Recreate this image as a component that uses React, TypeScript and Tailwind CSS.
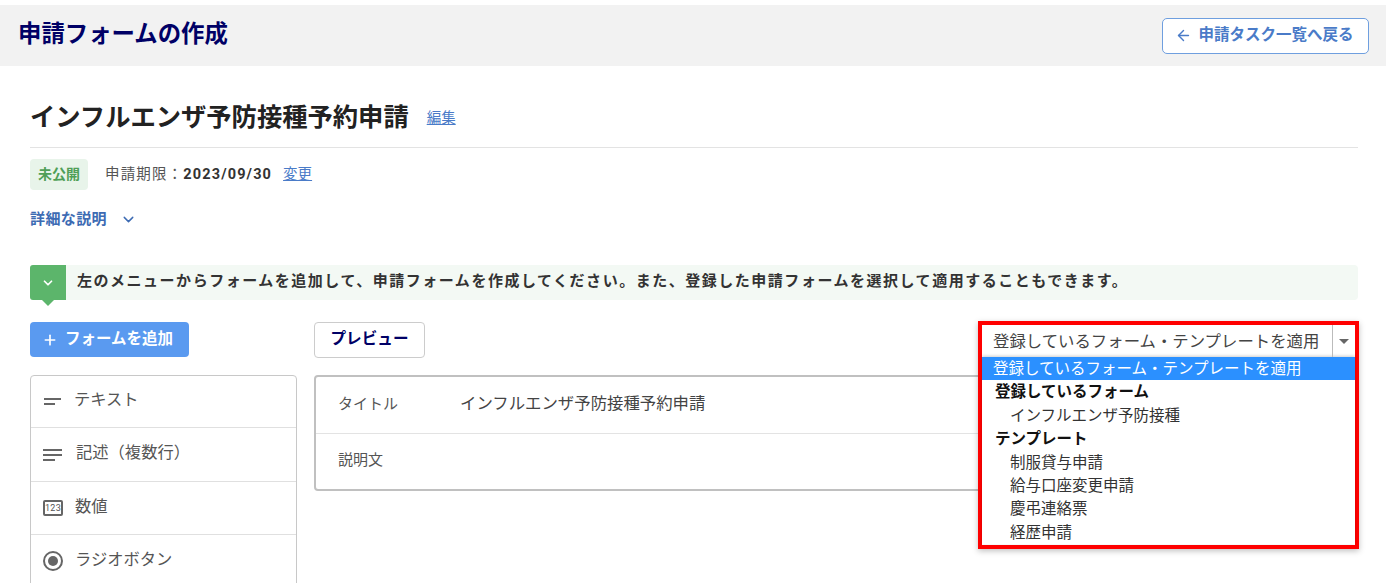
import { ArrowLeft, ChevronDown, Plus } from "lucide-react";

const FONT = "font-['Roboto','Noto_Sans_CJK_JP',sans-serif]";

function LinesIcon({ long }: { long?: boolean }) {
  if (long) {
    return (
      <svg width="20" height="14" viewBox="0 0 20 14" className="shrink-0">
        <rect x="0" y="1" width="19" height="2" fill="#666" />
        <rect x="0" y="6" width="19" height="2" fill="#666" />
        <rect x="0" y="11" width="12" height="2" fill="#666" />
      </svg>
    );
  }
  return (
    <svg width="20" height="8" viewBox="0 0 20 8" className="shrink-0">
      <rect x="1" y="0" width="17" height="2" fill="#666" />
      <rect x="1" y="5" width="11" height="2" fill="#666" />
    </svg>
  );
}

function NumberIcon() {
  return (
    <div className="flex h-[16px] w-[20px] shrink-0 items-center justify-center rounded-[2px] border-2 border-[#666] text-[9px] leading-none tracking-[0.3px] text-[#555]">
      123
    </div>
  );
}

function RadioIcon() {
  return (
    <div className="flex h-[20px] w-[20px] shrink-0 items-center justify-center rounded-full border-2 border-[#666]">
      <div className="h-[10px] w-[10px] rounded-full bg-[#666]" />
    </div>
  );
}

const MENU = [
  { label: "テキスト", icon: <LinesIcon />, h: "h-[51px]", gap: "gap-[11px]" },
  { label: "記述（複数行）", icon: <LinesIcon long />, h: "h-[54px]", gap: "gap-[13px]" },
  { label: "数値", icon: <NumberIcon />, h: "h-[53px]", gap: "gap-[12px]" },
  { label: "ラジオボタン", icon: <RadioIcon />, h: "h-[53px]", gap: "gap-[12px]" },
];

const TEMPLATES = ["制服貸与申請", "給与口座変更申請", "慶弔連絡票", "経歴申請"];

export default function App() {
  return (
    <div className={`${FONT} relative h-[583px] w-[1386px] overflow-hidden bg-white pt-[5px] text-[#333]`}>
      <header className="flex h-[61px] items-center justify-between bg-[#f2f2f2] pl-[18px] pr-[17px]">
        <h1 className="pb-[2px] text-[23.4px] font-bold leading-none text-[#000066]">申請フォームの作成</h1>
        <button className="flex h-[36px] w-[207px] items-center justify-center gap-[6px] rounded-[5px] border border-[#6f9fdf] bg-white pr-[2px] text-[15.5px] font-bold text-[#4a7bc8]">
          <ArrowLeft size={17} strokeWidth={2} />
          申請タスク一覧へ戻る
        </button>
      </header>

      <main className="pl-[30px] pr-[28px]">
        <div className="flex h-[82px] items-center gap-[18px] border-b border-[#e3e3e3] pt-[22px]">
          <h2 className="text-[25.3px] font-bold leading-none text-[#222]">インフルエンザ予防接種予約申請</h2>
          <a className="mt-[3px] text-[14.5px] text-[#4a7bc8] underline">編集</a>
        </div>

        <div className="mt-[11px] flex items-center">
          <span className="flex h-[31px] w-[58px] items-center justify-center rounded-[4px] bg-[#e8f4ea] text-[14px] font-bold text-[#4f9f57]">
            未公開
          </span>
          <span className="ml-[17px] text-[14.5px] tracking-[1.15px] text-[#555]">
            申請期限：<span className="font-bold text-[#333]">2023/09/30</span>
          </span>
          <a className="ml-[11px] text-[14.5px] text-[#4a7bc8] underline">変更</a>
        </div>

        <div className="mt-[19px] flex h-[20px] items-center gap-[13px] text-[15px] font-bold tracking-[0.4px] text-[#3d6bb3]">
          詳細な説明
          <ChevronDown size={17} strokeWidth={2} />
        </div>

        <div className="mt-[36px] flex h-[35px] items-center rounded-[4px] bg-[#f3f9f4]">
          <div className="relative flex h-[35px] w-[36px] shrink-0 items-center justify-center rounded-l-[3px] bg-[#5cb56b] text-white">
            <ChevronDown size={14} strokeWidth={3} />
            <div className="absolute left-[12px] top-[35px] h-0 w-0 border-x-[6px] border-t-[6px] border-x-transparent border-t-[#5cb56b]" />
          </div>
          <p className="mb-[2px] ml-[11px] whitespace-nowrap text-[15px] font-bold tracking-[1.52px] text-[#333]">
            左のメニューからフォームを追加して、申請フォームを作成してください。また、登録した申請フォームを選択して適用することもできます。
          </p>
        </div>

        <div className="mt-[22px] flex gap-[17px]">
          <aside className="w-[267px] shrink-0">
            <button className="flex h-[35px] w-[159px] items-center justify-center gap-[7px] rounded-[4px] bg-[#5a9af0] pr-[4px] text-[15.5px] font-bold text-white">
              <Plus size={16} strokeWidth={2.5} />
              フォームを追加
            </button>
            <ul className="mt-[18px] rounded-t-[4px] border border-[#c8c8c8]">
              {MENU.map((item, i) => (
                <li
                  key={item.label}
                  className={`flex items-center pl-[12px] text-[16.3px] text-[#555] ${item.h} ${item.gap} ${i > 0 ? "border-t border-[#e0e0e0]" : ""}`}
                >
                  {item.icon}
                  <span className="-translate-y-px">{item.label}</span>
                </li>
              ))}
            </ul>
          </aside>

          <section className="flex-1">
            <div className="flex h-[35px] items-start justify-between">
              <button className="flex h-[36px] w-[111px] items-center justify-center rounded-[4px] border border-[#ccc] bg-white text-[15.6px] font-bold text-[#000066]">
                プレビュー
              </button>
            </div>
            <div className="relative mt-[18px] h-[116px] w-[1044px] rounded-[4px] border-2 border-[#c0c0c0]">
              <div className="flex h-[57px] items-center border-b border-[#e3e3e3] pb-[2px] pl-[22px] text-[15px] text-[#555]">
                <span className="w-[122px]">タイトル</span>
                <span className="text-[16.4px] text-[#444]">インフルエンザ予防接種予約申請</span>
              </div>
              <div className="flex h-[55px] items-center pb-[2px] pl-[22px] text-[15px] text-[#555]">説明文</div>
            </div>
          </section>
        </div>
      </main>

      {/* 適用ドロップダウン：ハイライト枠はページ内容の上に重なる */}
      <div className="absolute left-[978px] top-[321px] h-[228px] w-[381px] border-[4px] border-[#ff0000] bg-white font-['Liberation_Sans','Noto_Sans_CJK_JP',sans-serif] shadow-[0_2px_6px_rgba(0,0,0,0.25)]">
        <div className="flex h-[32px] items-center justify-between">
          <span className="pl-[11px] text-[16.4px] text-[#444]">登録しているフォーム・テンプレートを適用</span>
          <div className="flex h-full w-[23px] items-center justify-center border-l border-[#bbb]">
            <div className="h-0 w-0 border-x-[5px] border-t-[5px] border-x-transparent border-t-[#666]" />
          </div>
        </div>
        <ul className="text-[15.5px] leading-[23.4px] text-[#333] shadow-[0_-1px_3px_rgba(0,0,0,0.2)]">
          <li className="bg-[#2b90ff] pl-[11px] text-white">登録しているフォーム・テンプレートを適用</li>
          <li className="pl-[13px] font-bold text-[#111]">登録しているフォーム</li>
          <li className="pl-[28px]">インフルエンザ予防接種</li>
          <li className="pl-[13px] font-bold text-[#111]">テンプレート</li>
          {TEMPLATES.map((t) => (
            <li key={t} className="pl-[28px]">{t}</li>
          ))}
        </ul>
      </div>
    </div>
  );
}
